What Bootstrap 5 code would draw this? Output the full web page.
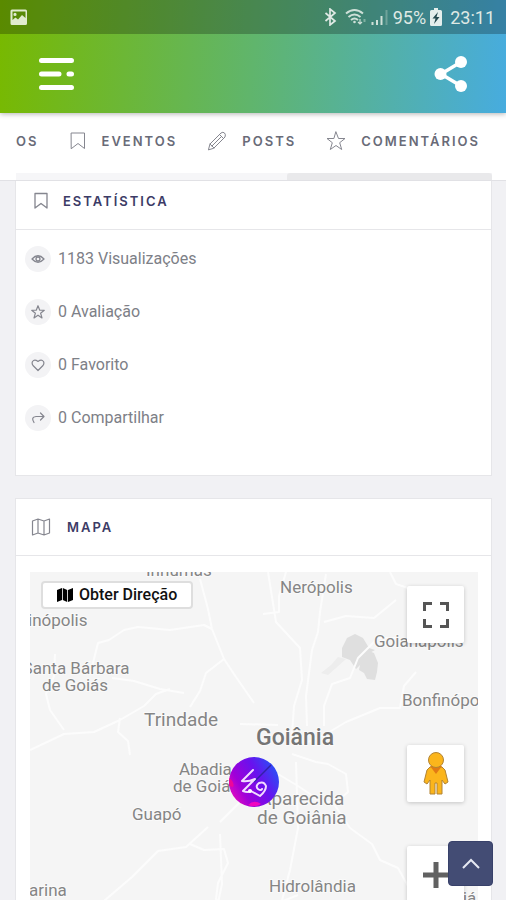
<!DOCTYPE html>
<html lang="pt-BR">
<head>
<meta charset="utf-8">
<meta name="viewport" content="width=device-width, initial-scale=1">
<title>Estatística e mapa</title>
<link href="https://cdn.jsdelivr.net/npm/bootstrap@5.3.0/dist/css/bootstrap.min.css" rel="stylesheet">
<style>
body{font-family:Roboto,"Liberation Sans",sans-serif;background:#f1f1f4;color:#7d8087}
svg{display:block;flex:none}
.top-area{background:linear-gradient(94deg,#78b900 0%,#60b56c 50%,#47acdf 100%);box-shadow:0 1px 5px rgba(0,0,0,.3);z-index:2}
.status-strip{height:34px;background:rgba(0,0,0,.25);color:#dfe9e4;font-family:Roboto,sans-serif;font-size:18px;padding:0 11px 0 10px}
.app-header{height:79px;padding:0 38px}
.caps{font-family:Inter,"Noto Sans",sans-serif;font-size:13px;font-weight:600;letter-spacing:2px;line-height:20px}
.tab-strip{padding:18px 26px 22px 16px;color:#696b78}
.tab-strip a{color:inherit;gap:15px}
.line-icon{fill:none;stroke:#85868f;stroke-width:1;stroke-linejoin:round;stroke-linecap:round}
.scroll-track{height:7px;margin:0 14px 0 16px;background:#f6f6f8}
.scroll-thumb{width:43%;background:#e9e9eb;border-radius:3px 3px 0 0}
.tabs-area{border-bottom:1px solid #e1e1e5}
.scroll-main{scrollbar-width:none;padding:0 14px 0 15px}
.scroll-main::-webkit-scrollbar{display:none}
.panel{background:#fff;border:1px solid #e6e6e9}
.panel + .panel{margin-top:22px}
.panel-head{border-bottom:1px solid #e6e6e9;color:#3c3b66;padding:0 15px;min-height:57px}
.panel-head.short{min-height:49px}
.panel-head h2{color:inherit}
.stat-list{padding:16px 9px 44px;gap:27px}
.stat-list li{font-size:16px;line-height:26px;gap:7px}
.dot-icon{width:26px;height:26px;border-radius:50%;background:#f3f3f5}
.map-wrap{padding:16px 13px 16px 14px}
.map-box{height:400px;background:#f5f5f5}
.map-box text{font-family:Roboto,sans-serif;font-size:17px;fill:#858585;stroke:#fafafa;stroke-width:2px;paint-order:stroke}
.map-box .town{font-size:19px}
.map-box .city{font-size:23px;font-weight:500;fill:#757575}
.roads{fill:none;stroke:#fcfcfc;stroke-width:2;stroke-linejoin:round}
.direction-btn{left:11px;top:9px;height:28px;padding:0 14px;background:#fff;border:2px solid #dedede;border-radius:4px;color:#111;font-size:16px;font-weight:500;line-height:20px;gap:6px}
.map-ctl{right:14px;width:57px;height:57px;background:#fff;border:0;border-radius:2px;box-shadow:0 1px 4px rgba(0,0,0,.2)}
.ctl-full{top:14px}.ctl-man{top:173px}.ctl-zoom{top:274px}
.map-pin{left:198px;top:184px}
.up-btn{right:13px;bottom:14px;width:45px;height:45px;background:#434c74;border:1px solid #38416a;border-radius:4px}
</style>
</head>
<body>
<div class="d-flex flex-column vh-100 overflow-hidden">
  <header class="top-area position-relative">
    <div class="status-strip d-flex align-items-center justify-content-between">
      <svg width="18" height="17" viewBox="0 0 18 17"><path fill="#e0ebce" fill-rule="evenodd" d="M2 .5h13.500q1.500 0 1.500 1.500v12.500q0 1.500-1.500 1.500H2q-1.500 0-1.500-1.500V2Q.5.500 2 .5zM2.500 2.500V11l3-2.500 2.500 2 4-4.500 3.500 3V2.500zM5 3.800a1.600 1.600 0 1 1 0 3.200 1.600 1.600 0 0 1 0-3.200z"/></svg>
      <div class="d-flex align-items-center">
        <svg class="me-2" width="13" height="18" viewBox="0 0 13 18" fill="none" stroke="#dfe9e4" stroke-width="1.700"><path d="M1.500 5l9.500 8-5 4V1l5 4-9.500 8"/></svg>
        <svg class="me-1" width="22" height="18" viewBox="0 0 22 18" fill="none" stroke="#cfe0d8" stroke-width="2"><path d="M1 5.500q8.500-7 17 0M3.500 9q6-5 12 0M6 12q3.500-3 7 0"/><circle cx="9.500" cy="14" r="1.300" fill="#cfe0d8" stroke="none"/><path d="M15 11v5m-2-2 2 2 2-2" stroke-width="1.200"/><path d="M19.500 14v-3" stroke="#7fb0a2" stroke-width="2"/></svg>
        <svg class="me-1" width="18" height="18" viewBox="0 0 18 18" stroke-width="2"><path stroke="#cfe0d8" d="M1.500 17v-3M6 17v-5M10.500 17V8"/><path stroke="#6fa39a" d="M15.500 17V2"/></svg>
        <span>95%</span>
        <svg class="mx-1" width="12" height="18" viewBox="0 0 12 18"><path fill="#e3eeec" d="M4 0h4v2h2.500q1.500 0 1.500 1.500v13q0 1.500-1.500 1.500h-9Q0 18 0 16.500v-13Q0 2 1.500 2H4z"/><path fill="#244a50" d="M8 4 2.500 10.500h3L4 16l5.500-7h-3z"/></svg>
        <span class="ms-1">23:11</span>
      </div>
    </div>
    <div class="app-header d-flex align-items-center justify-content-between">
      <button type="button" class="btn p-0 border-0" aria-label="Menu"><svg width="38" height="36" viewBox="0 0 38 36" stroke="#fff" stroke-width="5" stroke-linecap="round"><path d="M3.500 4.500h30M3.500 18h17.500M31 18h2.500M3.500 31.500h30"/></svg></button>
      <button type="button" class="btn p-0 border-0" aria-label="Partilhar"><svg width="34" height="36" viewBox="0 0 34 36" fill="#fff"><path d="M27 6 7 18l20 12" fill="none" stroke="#fff" stroke-width="3.500"/><circle cx="27" cy="6" r="6"/><circle cx="6.500" cy="18" r="6"/><circle cx="27" cy="30" r="6"/></svg></button>
    </div>
  </header>
  <div class="tabs-area bg-white">
    <nav class="tab-strip caps d-flex align-items-center justify-content-between">
      <a href="#os" class="text-decoration-none">OS</a>
      <a href="#eventos" class="d-flex align-items-center text-decoration-none"><svg class="line-icon" width="18" height="20" viewBox="0 0 18 20"><path d="M2.500 2h13v15.500L9 12.500l-6.500 5z"/></svg>EVENTOS</a>
      <a href="#posts" class="d-flex align-items-center text-decoration-none"><svg class="line-icon" width="20" height="20" viewBox="0 0 20 20"><path d="M1.500 18.500 3 13 14 2q2-1.500 3.500 0t.5 4L7 17zM12.500 3.500l4 4M3 13l4 4M5 15l9.500-9.500"/></svg>POSTS</a>
      <a href="#comentarios" class="d-flex align-items-center text-decoration-none"><svg class="line-icon" width="20" height="20" viewBox="0 0 20 20"><path d="M10 1l2.500 6.500h6.500l-5.300 4.200 2 6.800L10 14.500l-5.700 4 2-6.800L1 7.500h6.500z"/></svg>COMENTÁRIOS</a>
    </nav>
    <div class="scroll-track d-flex justify-content-end"><div class="scroll-thumb"></div></div>
  </div>
  <main class="scroll-main flex-grow-1 overflow-auto">
    <section class="panel border-top-0">
      <div class="panel-head short d-flex align-items-center gap-2 pb-2">
        <svg class="line-icon" width="20" height="20" viewBox="0 0 20 20"><path stroke-width="1.300" d="M4 2.500h12V17l-6-4.500L4 17z"/></svg>
        <h2 class="caps m-0 ps-1">ESTATÍSTICA</h2>
      </div>
      <ul class="stat-list list-unstyled d-flex flex-column mb-0">
        <li class="d-flex align-items-center"><span class="dot-icon d-flex align-items-center justify-content-center"><svg class="line-icon" width="14" height="14" viewBox="0 0 14 14"><path stroke-width="1.300" d="M1 7q6-6.500 12 0-6 6.500-12 0z"/><circle cx="7" cy="7" r="2" stroke-width="1.300"/></svg></span>1183 Visualizações</li>
        <li class="d-flex align-items-center"><span class="dot-icon d-flex align-items-center justify-content-center"><svg class="line-icon" width="14" height="14" viewBox="0 0 20 20"><path stroke-width="1.700" d="M10 1l2.500 6.500h6.500l-5.300 4.200 2 6.800L10 14.500l-5.700 4 2-6.800L1 7.500h6.500z"/></svg></span>0 Avaliação</li>
        <li class="d-flex align-items-center"><span class="dot-icon d-flex align-items-center justify-content-center"><svg class="line-icon" width="14" height="14" viewBox="0 0 14 14"><path stroke-width="1.200" d="M7 12.500 2 7.500Q.5 5.500 1.500 3.500 3.500 1 7 3.500q3.500-2.500 5.500 0 1 2-.5 4z"/></svg></span>0 Favorito</li>
        <li class="d-flex align-items-center"><span class="dot-icon d-flex align-items-center justify-content-center"><svg class="line-icon" width="14" height="14" viewBox="0 0 14 14"><path stroke-width="1.200" d="M3 11.500Q-.5 6 5 5.500h8M9.500 2 13 5.500 9.500 9"/></svg></span>0 Compartilhar</li>
      </ul>
    </section>
    <section class="panel">
      <div class="panel-head d-flex align-items-center gap-3">
        <svg class="line-icon" width="20" height="20" viewBox="0 0 20 20"><path stroke-width="1.200" d="M1.500 4 7 2l6 2 5.500-2v14L13 18l-6-2-5.500 2zM7 2v14M13 4v14"/></svg>
        <h2 class="caps m-0">MAPA</h2>
      </div>
      <div class="map-wrap">
        <div class="map-box position-relative overflow-hidden">
          <svg width="100%" height="400" role="img" aria-label="Mapa de Goiânia">
            <g fill="#dfdfdf"><path d="M312 76l5-10 8-4 8 4 6 10 6 2-9 5-5 9-5 5-6-9-8-3z"/><path d="M331 88l8-9 5 2 4 10-1 9-2 8-8-1-3-6-5-3z"/><path d="M291 101l10-8 7-8 8 2-10 9-8 7z" fill="#ededed"/></g>
            <g class="roads">
              <path d="M0 178l34-16 30-2 26-12 24-14 12-12 14-5M34 158l-14-20-4-16 8-18 1-22M82 106l22 3 26 8 24 4M90 146l-2 14 10 9 2 14M182 57l-8-4-34 5-32-3-14 3-15 10-11 3-8 32M182 57l12 30 12 18 18 26M194 87l-18 14-6 18-10 16M182 57l-4-20-8-30"/>
              <path d="M210 152l38 1M256 0l-7 24 0 16-16 2M238 0l8 50 24 26 2 32-8 26-2 28M296 2l-6 38-2 20-6 18-6 46 1 30M294 50l22-6 28 2 22-18M360 0l6 12 30 10M386 100l-12 14-4 22-20 0-34 14-20 12-18 8M368 66l-20 0-20 20-8 20-18 6-8 22 0 20"/>
              <path d="M262 182l24 8 12 2 18 10 2 18-14 12-18-6-18-12-20-12M304 232l16 24 22 16 8 16 18 8 20 36M190 262l2 50-8 38M266 190l2 66-8 42-12 46 4 24 0 32M240 190l-30 40-20 20M178 255l-22 20-28 4-26 26-28 24-7 22 6 50M160 272l14 6 20-1 4 14-10 20-2 16 14 16 18 2 20-10 30-12M196 340l2 60M168 358l-10 24-20 12M222 400l8-24 30-14 16-14M30 378l28-4 20-6"/>
            </g>
            <text x="116" y="4">Inhumas</text><text x="250" y="21">Nerópolis</text><text x="-2" y="54">inópolis</text><text x="344" y="75">Goianápolis</text>
            <text x="46" y="102" text-anchor="middle">Santa Bárbara</text><text x="45" y="119" text-anchor="middle">de Goiás</text>
            <text x="372" y="134">Bonfinópolis</text><text class="town" x="114" y="154">Trindade</text>
            <text class="city" x="226" y="173">Goiânia</text>
            <text x="149" y="203">Abadia</text><text x="143" y="220">de Goiás</text><text x="102" y="248">Guapó</text>
            <text class="town" x="229" y="233">Aparecida</text><text class="town" x="227" y="252">de Goiânia</text>
            <text x="239" y="320">Hidrolândia</text><text x="-1" y="324">arina</text><text x="433" y="332">já</text>
          </svg>
          <svg class="map-pin position-absolute" width="52" height="52" viewBox="0 0 52 52">
            <defs><linearGradient id="pin" x1="0" y1=".7" x2=".9" y2=".2"><stop offset="0" stop-color="#e00ac0"/><stop offset=".25" stop-color="#a000d8"/><stop offset=".65" stop-color="#6812ee"/><stop offset="1" stop-color="#2f4af5"/></linearGradient></defs>
            <circle cx="26" cy="26" r="25" fill="url(#pin)"/><path d="M26 26 43 9" stroke="#3320a8" stroke-width="1.500"/><path d="M20 49q6-6 13-1-6 4-13 1z" fill="#f004c0"/><path d="M1 22q6 4 4 9l-4-1z" fill="#ee0898"/>
            <path d="M25 14 14 25q6 1 13-2L15 35q5 2 8 0l9 5q6-5 6-10-2-5-7-3-4 3-1 6 3 2 4 0" fill="none" stroke="#f2dcff" stroke-width="2" stroke-linejoin="round" stroke-linecap="round"/><circle cx="22" cy="35" r="2" fill="#fff"/>
          </svg>
          <button type="button" class="direction-btn position-absolute d-flex align-items-center"><svg width="16" height="16" viewBox="0 0 16 16"><path d="M0 3 5 1v12l-5 2zM5.800 1l4.400 2v12l-4.400-2zM11 3l5-2v12l-5 2z"/></svg>Obter Direção</button>
          <button type="button" class="map-ctl ctl-full position-absolute d-flex align-items-center justify-content-center" aria-label="Tela cheia"><svg width="26" height="26" viewBox="0 0 26 26" fill="none" stroke="#555" stroke-width="3"><path d="M1.500 9V1.500H9M17 1.500h7.500V9M24.500 17v7.500H17M9 24.500H1.500V17"/></svg></button>
          <button type="button" class="map-ctl ctl-man position-absolute d-flex align-items-center justify-content-center" aria-label="Street View"><svg width="26" height="44" viewBox="0 0 26 44" fill="#fbb51c" stroke="#b28333" stroke-width="1"><path d="M7 15h12l3 3 3 12-3 2-3-4v14h-5V31h-2v11H7V28l-3 4-3-2 3-12z"/><path d="M7 14h12l-6 8z" fill="#e27a14" stroke="none"/><circle cx="13" cy="8" r="7.500"/></svg></button>
          <button type="button" class="map-ctl ctl-zoom position-absolute d-flex align-items-center justify-content-center" aria-label="Aumentar zoom"><svg width="26" height="26" viewBox="0 0 26 26" stroke="#616161" stroke-width="5"><path d="M0 13h26M13 0v26"/></svg></button>
        </div>
      </div>
    </section>
  </main>
</div>
<button type="button" class="up-btn position-fixed d-flex align-items-center justify-content-center" aria-label="Voltar ao topo"><svg width="18" height="12" viewBox="0 0 18 12" fill="none" stroke="#e6e9f3" stroke-width="2"><path d="M1 10l8-8 8 8"/></svg></button>
<script src="https://cdn.jsdelivr.net/npm/bootstrap@5.3.0/dist/js/bootstrap.bundle.min.js"></script>
</body>
</html>
